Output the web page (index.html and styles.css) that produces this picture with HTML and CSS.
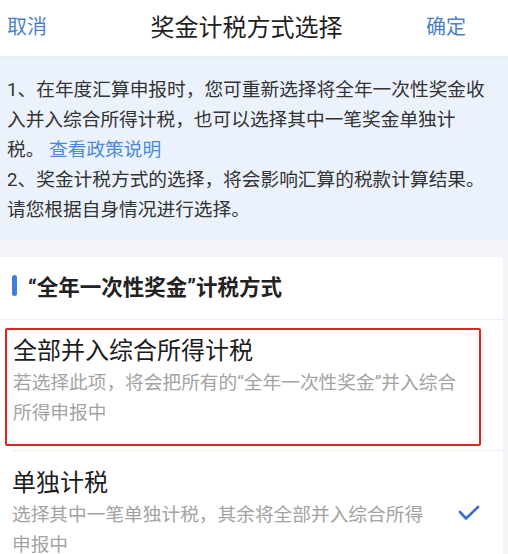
FILE: index.html
```html
<!DOCTYPE html>
<html>
 <head>
  <title>奖金计税方式选择</title><meta charset="utf-8">
  <link rel="stylesheet" href="styles.css">
 </head>
 <body>
  <div class="page">
    <div class="nav">
      <a class="nav-btn" href="#">取消</a>
      <h1>奖金计税方式选择</h1>
      <a class="nav-btn" href="#">确定</a>
    </div>

    <div class="notice">
      <p>1、在年度汇算申报时，您可重新选择将全年一次性奖金收入并入综合所得计税，也可以选择其中一笔奖金单独计税。 <a href="#">查看政策说明</a></p>
      <p>2、奖金计税方式的选择，将会影响汇算的税款计算结果。请您根据自身情况进行选择。</p>
    </div>

    <div class="options">
      <h2><span class="bar"></span>“全年一次性奖金”计税方式</h2>
      <div class="option marked">
        <div class="option-text">
          <h3>全部并入综合所得计税</h3>
          <p>若选择此项，将会把所有的“全年一次性奖金”并入综合所得申报中</p>
        </div>
      </div>
      <div class="option">
        <div class="option-text">
          <h3>单独计税</h3>
          <p>选择其中一笔单独计税，其余将全部并入综合所得申报中</p>
        </div>
        <svg class="check" width="22" height="16" viewBox="0 0 22 16">
          <path d="M2 7 L8 13.5 L20 2" fill="none" stroke="#3b6fcf" stroke-width="2.6" stroke-linecap="round" stroke-linejoin="round"/>
        </svg>
      </div>
    </div>
  </div>
 </body>
</html>
```

FILE: styles.css
```css
* {
  box-sizing: border-box;
}

body {
  margin: 0;
  font-family: Roboto, "Noto Sans CJK SC", sans-serif;
  color: #222;
  background: #fff;
}

.page {
  width: 508px;
  height: 554px;
  overflow: hidden;
}

.nav {
  height: 57px;
  display: flex;
  align-items: center;
  justify-content: space-between;
  padding: 0 42px 6px 7px;
  border-bottom: 1px solid #e9edf3;
}

.nav h1 {
  margin: 0 0 0 20px;
  font-size: 24px;
  font-weight: 400;
  color: #1f1f1f;
}

.nav-btn {
  font-size: 20px;
  color: #4a7fc9;
  text-decoration: none;
}

.notice {
  background: #ebf2fc;
  padding: 18px 18px 0 7px;
  height: 200px;
  border-bottom: 17px solid #f3f5fa;
}

.notice p {
  margin: 0;
  font-size: 18.7px;
  line-height: 30px;
  color: #333;
}

.notice a {
  color: #4a8ad8;
  text-decoration: none;
}

.options {
  border-right: 5px solid #f3f4f7;
}

.options h2 {
  margin: 0;
  height: 63px;
  display: flex;
  align-items: center;
  padding: 0 0 6px 12px;
  font-size: 21.5px;
  font-weight: 700;
  color: #222;
  border-bottom: 1px solid #eceef2;
}

.bar {
  width: 5px;
  height: 21px;
  border-radius: 3px;
  background: #3b7fe0;
  margin-right: 11px;
}

.option {
  display: flex;
  height: 121px;
}

.option.marked {
  margin: 8px 22px 4px 5px;
  padding: 0 6px;
  height: 118px;
  border: 2px solid #e3231f;
  border-radius: 2px;
}

.option-text {
  flex: 1;
}

.option h3 {
  margin: 4px 0 0;
  font-size: 24px;
  font-weight: 400;
  line-height: 34px;
  color: #1c1c1c;
}

.option p {
  margin: 0;
  font-size: 18.7px;
  line-height: 30px;
  color: #a3a3a3;
}

.option + .option {
  border-top: 1px solid #eceef2;
  margin-left: 12px;
  padding-top: 11px;
}

.option + .option .option-text {
  padding-right: 28px;
}

.check {
  margin: 43px 23px 0 0;
}
```
